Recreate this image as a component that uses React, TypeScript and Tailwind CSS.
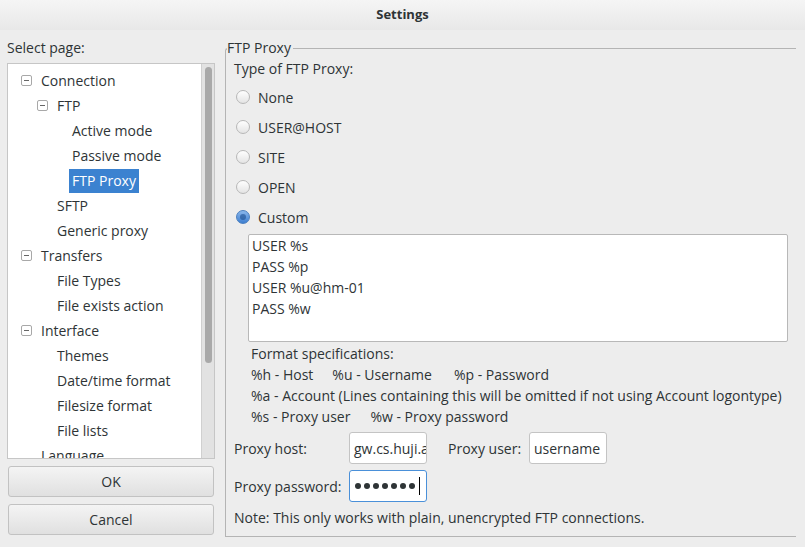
import React from 'react';

const font = { fontFamily: '"Open Sans", "DejaVu Sans", sans-serif' };

type Node = { label: string; level: number; expander?: boolean; selected?: boolean };

const tree: Node[] = [
  { label: 'Connection', level: 0, expander: true },
  { label: 'FTP', level: 1, expander: true },
  { label: 'Active mode', level: 2 },
  { label: 'Passive mode', level: 2 },
  { label: 'FTP Proxy', level: 2, selected: true },
  { label: 'SFTP', level: 1 },
  { label: 'Generic proxy', level: 1 },
  { label: 'Transfers', level: 0, expander: true },
  { label: 'File Types', level: 1 },
  { label: 'File exists action', level: 1 },
  { label: 'Interface', level: 0, expander: true },
  { label: 'Themes', level: 1 },
  { label: 'Date/time format', level: 1 },
  { label: 'Filesize format', level: 1 },
  { label: 'File lists', level: 1 },
  { label: 'Language', level: 0 },
];

function Expander() {
  return (
    <span className="w-[11px] h-[11px] border border-[#a8a8a8] rounded-[2px] bg-white flex items-center justify-center">
      <span className="w-[5px] h-px bg-[#666]" />
    </span>
  );
}

function TreeRow({ node }: { node: Node }) {
  const indent = ['pl-[13px]', 'pl-[29px]', 'pl-[44px]'][node.level];
  return (
    <div className={`h-[25px] flex items-center ${indent}`}>
      <div className="w-[17px] flex items-center">{node.expander && <Expander />}</div>
      <span
        className={`px-[3px] leading-[24px] whitespace-nowrap ${
          node.selected ? 'bg-[#3b82d0] text-white' : 'text-[#2e3436]'
        }`}
      >
        {node.label}
      </span>
    </div>
  );
}

function Radio({ checked, label }: { checked?: boolean; label: string }) {
  return (
    <div className="h-[30px] flex items-center pl-[2px]">
      <span
        className={`w-[14px] h-[14px] rounded-full border flex items-center justify-center ${
          checked
            ? 'border-[#4a7fbf] bg-gradient-to-b from-[#8ab7ec] to-[#3d7fd0]'
            : 'border-[#b8b8b8] bg-gradient-to-b from-white to-[#e4e4e4]'
        }`}
      >
        {checked && <span className="w-[6px] h-[6px] rounded-full bg-[#1d4f8f] opacity-60" />}
      </span>
      <span className="ml-[8px] text-[#2e3436]">{label}</span>
    </div>
  );
}

function Field({ value, focused, password }: { value: string; focused?: boolean; password?: boolean }) {
  return (
    <div
      className={`w-[78px] h-[32px] rounded-[3px] bg-white border flex items-center pl-[4px] overflow-hidden whitespace-nowrap ${
        focused ? 'border-[#4a90d9]' : 'border-[#c4c4c4]'
      }`}
    >
      {password ? (
        <span className="flex items-center gap-[3px] pl-[1px]">
          {Array.from({ length: 7 }).map((_, i) => (
            <span key={i} className="w-[6px] h-[6px] rounded-full bg-[#2e3436]" />
          ))}
          <span className="w-px h-[18px] bg-black ml-[1px]" />
        </span>
      ) : (
        <span className="text-[#2e3436]">{value}</span>
      )}
    </div>
  );
}

export default function App() {
  return (
    <div className="w-[805px] h-[547px] bg-[#ededed] text-[14px] text-[#2e3436] flex flex-col overflow-hidden" style={font}>
      <div className="h-[30px] flex items-center justify-center bg-gradient-to-b from-[#f5f5f5] to-[#e8e8e8] font-bold text-[13px] text-[#2e3436]">
        Settings
      </div>
      <div className="flex flex-1 min-h-0">
        {/* left column */}
        <div className="w-[225px] pl-[7px] flex flex-col">
          <div className="h-[33px] flex items-center pt-[2px]">Select page:</div>
          <div className="w-[208px] h-[396px] border border-[#c6c6c6] bg-white flex overflow-hidden">
            <div className="flex-1 pt-[4px] overflow-hidden">
              {tree.map((n) => (
                <TreeRow key={n.label} node={n} />
              ))}
            </div>
            <div className="w-[13px] bg-[#e2e2e2] border-l border-[#d0d0d0] pt-[3px] flex justify-center">
              <div className="w-[7px] h-[296px] rounded-full bg-[#a9a9a9]" />
            </div>
          </div>
          <button className="mt-[7px] ml-[1px] w-[206px] h-[31px] rounded-[3px] border border-[#c2c2c2] bg-gradient-to-b from-[#f4f4f4] to-[#e0e0e0] text-[#2e3436]">
            OK
          </button>
          <button className="mt-[7px] ml-[1px] w-[206px] h-[31px] rounded-[3px] border border-[#c2c2c2] bg-gradient-to-b from-[#f4f4f4] to-[#e0e0e0] text-[#2e3436]">
            Cancel
          </button>
        </div>

        {/* right column */}
        <div className="flex-1 pr-[9px] pt-[18px]">
          <div className="relative h-[489px] border-l border-b border-t border-[#b4b4b4] rounded-tl-[3px]">
            <span className="absolute -top-[10px] left-[1px] bg-[#ededed] pr-[2px] leading-[18px]">FTP Proxy</span>
            <div className="pl-[8px] pt-[10px]">
              <div className="h-[20px] leading-[20px]">Type of FTP Proxy:</div>
              <div className="mt-[3px]">
                <Radio label="None" />
                <Radio label="USER@HOST" />
                <Radio label="SITE" />
                <Radio label="OPEN" />
                <Radio label="Custom" checked />
              </div>
              <div className="ml-[14px] mt-[2px] w-[540px] h-[108px] bg-white border border-[#b8b8b8] rounded-[2px] pl-[3px] leading-[21px]">
                <div>USER %s</div>
                <div>PASS %p</div>
                <div>USER %u@hm-01</div>
                <div>PASS %w</div>
              </div>
              <div className="ml-[17px] mt-[1px] leading-[21px]">
                <div>Format specifications:</div>
                <div className="flex">
                  <span className="mr-[19px]">%h - Host</span>
                  <span className="mr-[22px]">%u - Username</span>
                  <span>%p - Password</span>
                </div>
                <div className="whitespace-nowrap">%a - Account (Lines containing this will be omitted if not using Account logontype)</div>
                <div className="flex">
                  <span className="mr-[20px]">%s - Proxy user</span>
                  <span>%w - Proxy password</span>
                </div>
              </div>
              <div className="mt-[5px] flex items-center h-[32px]">
                <span className="w-[115px]">Proxy host:</span>
                <Field value="gw.cs.huji.ac.il" />
                <span className="ml-[21px] w-[81px]">Proxy user:</span>
                <Field value="username" />
              </div>
              <div className="mt-[6px] flex items-center h-[32px]">
                <span className="w-[115px]">Proxy password:</span>
                <Field value="" password focused />
              </div>
              <div className="mt-[6px] leading-[20px]">Note: This only works with plain, unencrypted FTP connections.</div>
            </div>
          </div>
        </div>
      </div>
    </div>
  );
}
